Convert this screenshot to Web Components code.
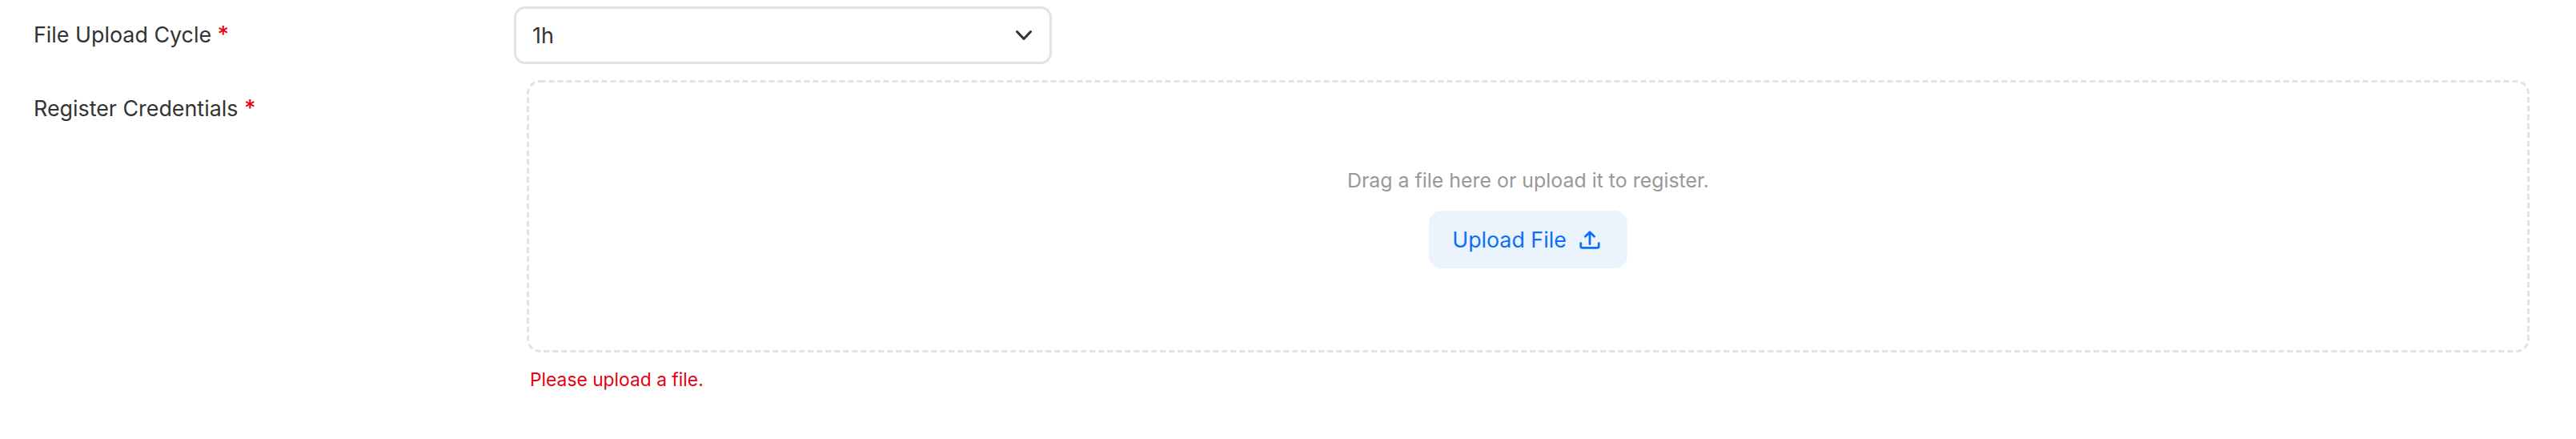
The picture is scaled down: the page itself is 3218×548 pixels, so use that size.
<!DOCTYPE html>
<html><head><meta charset="utf-8"><style>
html,body{margin:0;padding:0;background:#fff;font-family:Inter,"Liberation Sans",sans-serif}
</style></head><body>
<settings-form>
<form-row label="File Upload Cycle" style="height:92px"><select-box value="1h"></select-box></form-row>
<form-row label="Register Credentials"><upload-zone></upload-zone></form-row>
</settings-form>
<script>
function def(name,html){customElements.define(name,class extends HTMLElement{connectedCallback(){if(this.shadowRoot)return;const s=this.attachShadow({mode:'open'});s.innerHTML=typeof html==='function'?html(this):html;}});}
def('settings-form',`<style>:host{display:flex;flex-direction:column;padding:8px 0 0 42px;width:3218px;height:548px;box-sizing:border-box}</style><slot></slot>`);
def('form-row',h=>`<style>:host{display:flex;align-items:flex-start}
.l{width:600px;flex:none;font-size:26.85px;line-height:40px;color:#333;padding-top:15px}
i{font-style:normal;color:#e60012;font-size:28px;font-weight:500}</style>
<div class="l">${h.getAttribute('label')} <i>*</i></div><slot></slot>`);
def('select-box',h=>`<style>:host{display:flex;align-items:center;justify-content:space-between;box-sizing:border-box;width:672px;height:72px;border:3px solid #e3e3e3;border-radius:14px;padding:0 16px 0 20px;font-size:27px;color:#333}
svg{width:32px;height:32px}</style><span>${h.getAttribute('value')}</span>
<svg viewBox="0 0 32 32" fill="none" stroke="#333" stroke-width="3" stroke-linecap="round" stroke-linejoin="round"><path d="M7.5 11.5l8.5 9 8.5-9"/></svg>`);
def('upload-zone',`<style>:host{display:block;margin-left:16px;width:2502px}
.z{position:relative;box-sizing:border-box;height:340px;display:flex;flex-direction:column;align-items:center;justify-content:center}
.b{position:absolute;inset:0;width:100%;height:100%}
p{margin:0 0 18px;font-size:24.9px;line-height:40px;color:#999}
button{all:unset;display:flex;align-items:center;gap:14px;box-sizing:border-box;height:72px;padding:0 32px 0 29px;background:#ebf3fd;border-radius:16px;color:#0b6ffa;font:26.8px/40px Inter,sans-serif}
button svg{width:30px;height:30px}
.e{margin:18px 0 0 4px;font-size:22.8px;line-height:32px;color:#e60012}</style>
<div class="z"><svg class="b"><rect x="1.5" y="1.5" width="2499" height="337" rx="15" fill="none" stroke="#e3e3e3" stroke-width="3" stroke-dasharray="7 4"/></svg><p>Drag a file here or upload it to register.</p>
<button>Upload File <svg viewBox="0 0 32 32" fill="none" stroke="#0b6ffa" stroke-width="3" stroke-linecap="round" stroke-linejoin="round"><path d="M4 21v4a2 2 0 0 0 2 2h20a2 2 0 0 0 2-2v-4M16 22V7M10 12l6-6 6 6"/></svg></button></div>
<div class="e">Please upload a file.</div>`);
</script></body></html>
